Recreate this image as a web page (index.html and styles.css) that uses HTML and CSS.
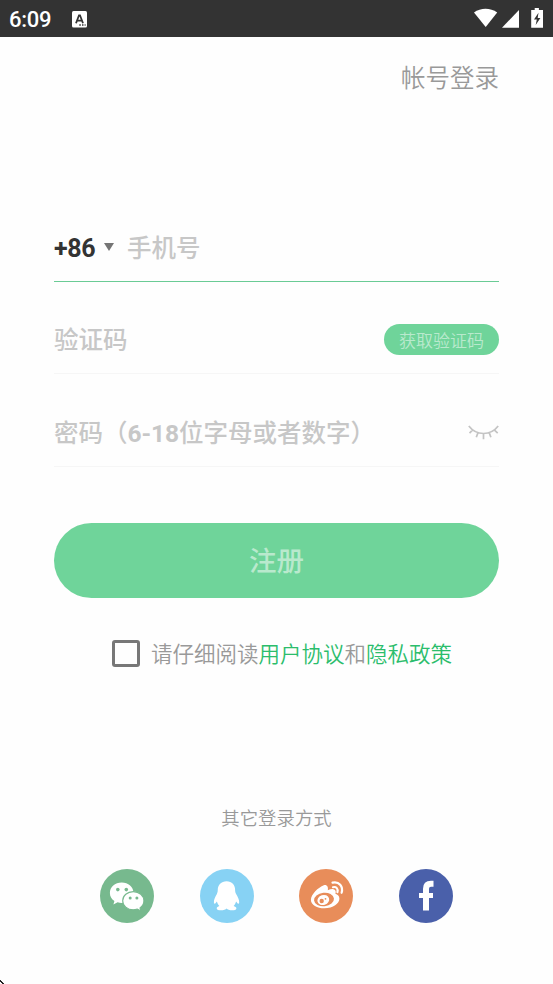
FILE: index.html
```html
<!DOCTYPE html>
<html lang="zh-CN">
<head>
<meta charset="utf-8">
<title>注册</title>
<link rel="stylesheet" href="styles.css">
</head>
<body>
<header class="status">
  <span class="time">6:09</span>
  <svg class="ime" width="15" height="17" viewBox="0 0 15 17"><rect width="15" height="16.5" rx="1.5" fill="#fff"/><path d="M4 12.200 7 4.300h1l3 7.900M5 9.600h5" fill="none" stroke="#333" stroke-width="1.800"/><path d="M7.300 14h1.500M10 14h1.500M12.600 14h1" stroke="#333" stroke-width="1.400"/></svg>
  <svg class="system" width="70" height="21" viewBox="0 0 70 21"><path d="M0 4.400C6.800-.5 16.200-.5 23.200 4.400L11.700 19Z" fill="#fff"/><path d="M28 19.700 45 2v17.700Z" fill="#fff"/><path d="M60.700 0h4.200v2H69v17.700H57.200V2h3.500Z" fill="#fff"/><path d="M64.500 4.800 60 11.500h2.800L61.700 17l4.700-7h-2.700Z" fill="#333"/></svg>
</header>
<main class="page">
  <a class="account">帐号登录</a>
  <form class="form">
    <div class="field phone"><span class="code">+86</span><i class="caret"></i><span class="hint">手机号</span></div>
    <div class="field verify"><span class="hint">验证码</span><button type="button" class="get-code">获取验证码</button></div>
    <div class="field password"><span class="hint">密码（<b>6-18</b>位字母或者数字）</span>
      <svg class="eye" width="31" height="15" viewBox="0 0 31 15" fill="none" stroke="#c4c4c4" stroke-width="1.700"><path d="M.8 1C8.500 11 22.500 11 30.200 1M4.800 4.800 1.500 8.200M10 7.600 8.300 12.300M15.500 8.500v5.700M21.200 7.600l1.700 4.700M26.200 4.800l3.500 3.400"/></svg>
    </div>
    <button type="button" class="register">注册</button>
    <div class="agree"><span class="box"></span><span class="terms">请仔细阅读<a>用户协议</a>和<a>隐私政策</a></span></div>
  </form>
  <section class="others">
    <p class="title">其它登录方式</p>
    <div class="logos">
      <svg viewBox="0 0 54 54"><circle cx="27" cy="27" r="27" fill="#77b98e"/><path d="M21.700 13.500c-6.700 0-11.800 4.500-11.800 10.400 0 3.400 1.600 6.200 4.500 8.200l-1 3.300 4.200-2.200c1.400.5 2.700.7 4.100.7 6.600 0 11.800-4.500 11.800-10.100s-5.200-10.300-11.800-10.300Z" fill="#fff"/><path d="M33.300 22.600c-6 0-10.600 4.100-10.600 9.100s4.600 9.100 10.600 9.100c1.500 0 2.800-.3 4-.7l3.500 1.800-.8-3c2.400-1.700 3.900-4.200 3.900-7.200 0-5-4.700-9.100-10.600-9.100Z" fill="#fff" stroke="#77b98e" stroke-width="1.100"/><g fill="#77b98e"><circle cx="17.800" cy="20.600" r="1.800"/><circle cx="26.300" cy="20.600" r="1.800"/><circle cx="30.200" cy="29" r="1.500"/><circle cx="36.900" cy="29" r="1.500"/></g></svg>
      <svg viewBox="0 0 54 54"><circle cx="27" cy="27" r="27" fill="#87d2f4"/><path d="M26.600 12.200c-5.400 0-8.800 3.800-8.800 8.400 0 1.500-.2 3.100-.9 4.500-1.800 3.100-3.200 6-3 8.500.1 1.300.7 1.500 1.600.6l1.400-1.700c.5 1.900 1.300 3.300 2.500 4.600-1.500.5-2.700 1.300-2.700 2.300 0 1.300 2 1.900 4.400 1.900 2.300 0 4.700-.6 5.500-1.800.8 1.200 3 1.800 5.400 1.800s4.400-.6 4.400-1.900c0-1-1.300-1.800-2.800-2.300 1.200-1.300 2-2.700 2.500-4.600l1.400 1.700c.9.900 1.600.7 1.700-.6.200-2.500-1.300-5.400-3.100-8.500-.8-1.400-1-3-1-4.500 0-4.600-3.100-8.400-8.500-8.400Z" fill="#fff"/></svg>
      <svg viewBox="0 0 54 54"><circle cx="27" cy="27" r="27" fill="#e88d5a"/><path d="M24.800 16.200c-5.500 2-12.900 9.300-12.900 14.500 0 5.400 6.300 8.600 13.500 8.600 8.800 0 15-4.700 15-9.500 0-2.900-1.700-4.300-4-5 1-2.700-.1-4.200-2-4.600-1.500-.3-3.600.2-5.600 1 .7-3.200-.8-5.900-4-5Z" fill="#fff"/><ellipse cx="25" cy="30.500" rx="10" ry="6.700" transform="rotate(-6 25 30.500)" fill="#e88d5a"/><ellipse cx="24.300" cy="31" rx="6" ry="5" transform="rotate(-18 24.300 31)" fill="#fff"/><circle cx="22.700" cy="32" r="2.200" fill="#e88d5a"/><circle cx="26.500" cy="29.800" r=".9" fill="#e88d5a"/><path d="M33.500 13.600c6.500-1.600 11 3.800 9.100 10.200M34 18.200c3.200-.9 5.400 1.700 4.400 4.900" fill="none" stroke="#fff" stroke-width="2.200" stroke-linecap="round"/></svg>
      <svg viewBox="0 0 54 54"><circle cx="27" cy="27" r="27" fill="#4a60aa"/><path d="M34.500 14.800H32c-3.500 0-5 1.800-5 5v21.700" fill="none" stroke="#fff" stroke-width="6"/><path d="M20 26.500h14" stroke="#fff" stroke-width="5"/></svg>
    </div>
  </section>
</main>
<svg class="corner" width="4" height="4" viewBox="0 0 4 4"><path d="M0 0h1v1h1v1h1v1h1v1H2V3H1V2H0Z" fill="#222"/></svg>
</body>
</html>
```
FILE: styles.css
```css
* { box-sizing: border-box; }
body { margin: 0; width: 553px; height: 984px; overflow: hidden; background: #fefefe; color: #999; font-family: Roboto, "Noto Sans CJK SC", sans-serif; }
.status { height: 37px; background: #333; display: flex; align-items: center; padding: 0 9px 0 9px; }
.time { width: 63px; padding-top: 1px; color: #fff; font-size: 22px; font-weight: 500; letter-spacing: -.3px; line-height: 37px; }
.ime { margin-top: 1px; }
.system { margin: 0 0 0 auto; width: 70px; }
.page { padding: 0 54px; }
.account { display: block; height: 80px; line-height: 80px; padding-top: 2px; text-align: right; font-size: 24.5px; font-weight: 350; }
.form { padding-top: 96px; }
.field { display: flex; align-items: center; border-bottom: 1px solid #f6f6f6; font-size: 24.5px; font-weight: 500; color: #c7c7c7; }
.hint { padding-bottom: 2px; }
.hint b { font-weight: 700; letter-spacing: -.1px; }
.phone { height: 69px; border-color: #6acb95; }
.verify { height: 92px; padding-top: 24px; justify-content: space-between; }
.password { height: 93px; padding-top: 24px; justify-content: space-between; }
.code { width: 50px; padding-top: 2px; color: #333; font-weight: 700; font-size: 25px; letter-spacing: -.3px; }
.caret { border: 5.5px solid transparent; border-top: 8px solid #757575; border-bottom: 0; margin-right: 13px; }
button { border: 0; padding: 0; font-family: inherit; background: #6fd49a; color: #b9e9cd; }
.get-code { width: 115px; height: 31px; border-radius: 16px; font-size: 17px; font-weight: 350; }
.register { display: block; width: 445px; height: 75px; padding-bottom: 3px; border-radius: 38px; margin-top: 56px; font-size: 27.5px; font-weight: 500; }
.agree { display: flex; align-items: center; height: 32px; margin: 39px 0 0 58px; font-size: 21.5px; font-weight: 350; white-space: nowrap; }
.terms { padding-bottom: 2px; }
.agree a { color: #2bbd6c; }
.box { width: 28px; height: 27px; border: 3px solid #777; border-radius: 3px; margin-right: 11px; }
.others { padding-top: 134px; }
.title { margin: 0; height: 32px; line-height: 32px; text-align: center; font-size: 18.4px; font-weight: 350; }
.logos { display: flex; justify-content: space-between; width: 353.5px; margin: 34px 0 0 45.7px; }
.logos svg { width: 54px; height: 54px; }
.corner { position: absolute; left: 0; bottom: 0; }
```
